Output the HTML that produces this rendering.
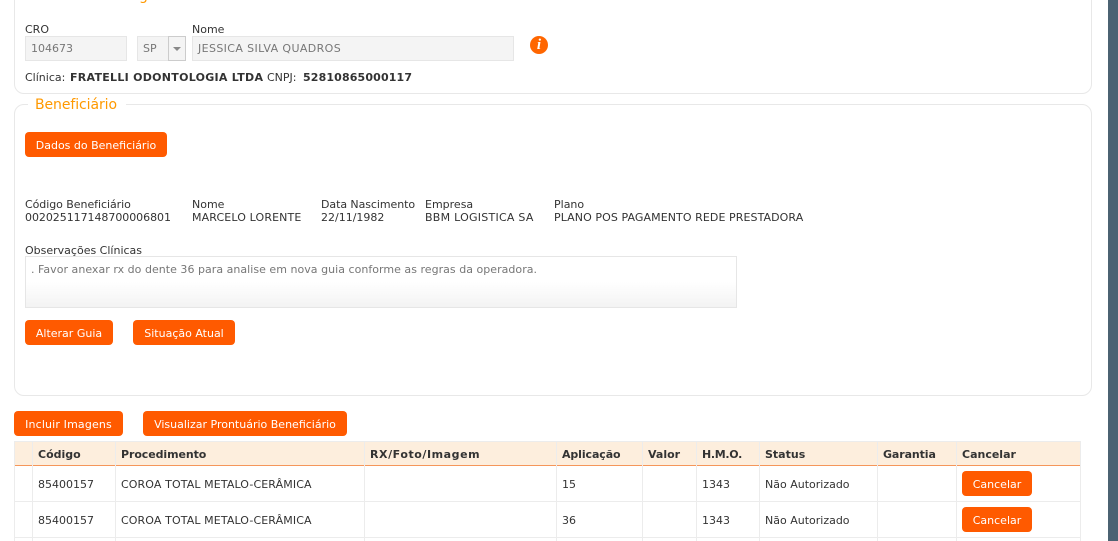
<!DOCTYPE html>
<html lang="pt">
<head>
<meta charset="utf-8">
<style>
html,body{margin:0;padding:0;background:#fff}
body{width:1118px;height:541px;position:relative;overflow:hidden;font-family:"DejaVu Sans",sans-serif;font-size:11px;color:#333}
.a{position:absolute;white-space:nowrap;line-height:13px}
.box{position:absolute;border:1px solid #e8e8e8;border-radius:10px;box-sizing:border-box;background:#fff}
.leg{position:absolute;background:#fff;color:#f90;font-size:14px;line-height:18px;white-space:nowrap;padding:0 9px 0 7px;letter-spacing:-.08px}
.btn{position:absolute;background:#ff5a00;color:#fff;border-radius:4px;text-align:center;height:25px;line-height:27px;white-space:nowrap;font-size:11px}
.inp{position:absolute;background:#f4f4f4;border:1px solid #e6e6e6;box-sizing:border-box;color:#777;height:25px;line-height:23px;padding-left:5px;white-space:nowrap;font-size:11px}
.v{position:absolute;width:1px;background:#ececec;top:442px;height:99px}
.h{position:absolute;left:14px;width:1067px;height:1px;background:#ececec}
.th{position:absolute;top:448px;font-weight:bold;line-height:13px;white-space:nowrap}
.td{position:absolute;line-height:13px;white-space:nowrap}
</style>
</head>
<body>
<div class="box" style="left:14px;top:-40px;width:1078px;height:134px"></div>
<div class="a" style="left:139px;top:-13px;color:#f90;font-size:14px;line-height:18px">g</div>
<div class="a" style="left:25px;top:23px">CRO</div>
<div class="inp" style="left:25px;top:36px;width:102px">104673</div>
<div class="inp" style="left:137px;top:36px;width:32px">SP</div>
<div class="inp" style="left:168px;top:36px;width:18px;border:1px solid #ccc;padding:0"></div>
<div style="position:absolute;left:173px;top:47px;width:0;height:0;border-left:4px solid transparent;border-right:4px solid transparent;border-top:4px solid #888"></div>
<div class="a" style="left:192px;top:23px">Nome</div>
<div class="inp" style="left:192px;top:36px;width:322px;letter-spacing:.38px">JESSICA SILVA QUADROS</div>
<div style="position:absolute;left:530px;top:36px;width:18px;height:18px;border-radius:50%;background:#f60;color:#fff;font:italic bold 15px/18px 'Liberation Serif',serif;text-align:center">i</div>
<div class="a" style="left:25px;top:71px">Clínica:</div>
<div class="a" style="left:70px;top:71px;font-weight:bold;letter-spacing:.28px">FRATELLI ODONTOLOGIA LTDA</div>
<div class="a" style="left:267px;top:71px">CNPJ:</div>
<div class="a" style="left:303px;top:71px;font-weight:bold;letter-spacing:.14px">52810865000117</div>

<div class="box" style="left:14px;top:104px;width:1078px;height:292px"></div>
<div class="leg" style="left:28px;top:96px">Beneficiário</div>
<div class="btn" style="left:25px;top:132px;width:142px">Dados do Beneficiário</div>

<div class="a" style="left:25px;top:198px;letter-spacing:-.05px">Código Beneficiário</div>
<div class="a" style="left:25px;top:211px;letter-spacing:-.05px">002025117148700006801</div>
<div class="a" style="left:192px;top:198px">Nome</div>
<div class="a" style="left:192px;top:211px;letter-spacing:.13px">MARCELO LORENTE</div>
<div class="a" style="left:321px;top:198px;letter-spacing:-.07px">Data Nascimento</div>
<div class="a" style="left:321px;top:211px">22/11/1982</div>
<div class="a" style="left:425px;top:198px">Empresa</div>
<div class="a" style="left:425px;top:211px;letter-spacing:.25px">BBM LOGISTICA SA</div>
<div class="a" style="left:554px;top:198px">Plano</div>
<div class="a" style="left:554px;top:211px;letter-spacing:.08px">PLANO POS PAGAMENTO REDE PRESTADORA</div>

<div class="a" style="left:25px;top:244px">Observações Clínicas</div>
<div style="position:absolute;left:25px;top:256px;width:712px;height:52px;box-sizing:border-box;border:1px solid #e6e6e6;background:linear-gradient(#fff 0,#fff 50%,#f3f3f3 100%);color:#777;padding:6px 5px;line-height:13px;white-space:nowrap;letter-spacing:.03px">. Favor anexar rx do dente 36 para analise em nova guia conforme as regras da operadora.</div>

<div class="btn" style="left:25px;top:320px;width:88px">Alterar Guia</div>
<div class="btn" style="left:133px;top:320px;width:102px">Situação Atual</div>

<div class="btn" style="left:14px;top:411px;width:109px;letter-spacing:.15px">Incluir Imagens</div>
<div class="btn" style="left:143px;top:411px;width:204px">Visualizar Prontuário Beneficiário</div>

<div style="position:absolute;left:14px;top:442px;width:1067px;height:24px;box-sizing:border-box;background:#fdeedd;border-bottom:1px solid #f5965a"></div>
<div class="h" style="top:441px"></div>
<div class="h" style="top:501px"></div>
<div class="h" style="top:537px"></div>
<div class="v" style="left:14px"></div>
<div class="v" style="left:32px"></div>
<div class="v" style="left:115px"></div>
<div class="v" style="left:364px"></div>
<div class="v" style="left:556px"></div>
<div class="v" style="left:642px"></div>
<div class="v" style="left:696px"></div>
<div class="v" style="left:759px"></div>
<div class="v" style="left:877px"></div>
<div class="v" style="left:956px"></div>
<div class="v" style="left:1080px"></div>

<div class="th" style="left:38px">Código</div>
<div class="th" style="left:121px;letter-spacing:-.08px">Procedimento</div>
<div class="th" style="left:370px;letter-spacing:.57px">RX/Foto/Imagem</div>
<div class="th" style="left:562px;letter-spacing:-.1px">Aplicação</div>
<div class="th" style="left:648px">Valor</div>
<div class="th" style="left:702px;letter-spacing:-.3px">H.M.O.</div>
<div class="th" style="left:765px">Status</div>
<div class="th" style="left:883px;letter-spacing:-.1px">Garantia</div>
<div class="th" style="left:962px">Cancelar</div>

<div class="td" style="left:38px;top:478px">85400157</div>
<div class="td" style="left:121px;top:478px;letter-spacing:.11px">COROA TOTAL METALO-CERÂMICA</div>
<div class="td" style="left:562px;top:478px">15</div>
<div class="td" style="left:702px;top:478px">1343</div>
<div class="td" style="left:765px;top:478px">Não Autorizado</div>
<div class="btn" style="left:962px;top:471px;width:70px">Cancelar</div>

<div class="td" style="left:38px;top:514px">85400157</div>
<div class="td" style="left:121px;top:514px;letter-spacing:.11px">COROA TOTAL METALO-CERÂMICA</div>
<div class="td" style="left:562px;top:514px">36</div>
<div class="td" style="left:702px;top:514px">1343</div>
<div class="td" style="left:765px;top:514px">Não Autorizado</div>
<div class="btn" style="left:962px;top:507px;width:70px">Cancelar</div>

<div style="position:absolute;left:1108px;top:0;width:10px;height:541px;background:#4b6272"></div>
</body>
</html>
